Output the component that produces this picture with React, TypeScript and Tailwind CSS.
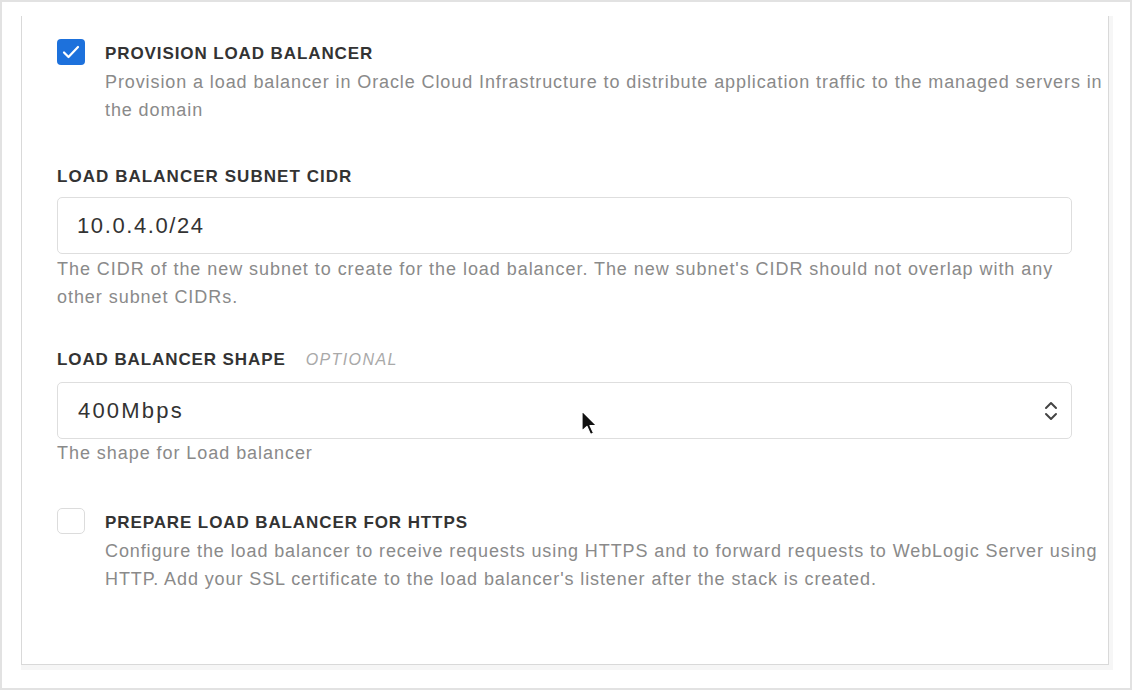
import React from "react";

const Check = () => (
  <svg width="18" height="14" viewBox="0 0 18 14" fill="none">
    <path d="M2 7.5 L6.5 12 L16 2" stroke="#fff" strokeWidth="2.2" strokeLinecap="round" strokeLinejoin="round" />
  </svg>
);

const CheckRow = ({ checked, title, desc }: { checked: boolean; title: string; desc: string }) => (
  <div className="flex items-start">
    {checked ? (
      <div className="w-[28px] h-[26px] shrink-0 rounded-[4px] bg-[#1d71dc] flex items-center justify-center">
        <Check />
      </div>
    ) : (
      <div className="w-[28px] h-[26px] shrink-0 rounded-[5px] border border-[#dcdcdc] bg-white" />
    )}
    <div className="ml-[20px] flex-1">
      <div className="text-[17px] font-bold text-[#333] leading-[30px] tracking-[0.9px]">{title}</div>
      <div className="-mt-[1px] text-[18px] text-[#8a8a8a] leading-[28px] tracking-[0.9px]">{desc}</div>
    </div>
  </div>
);

export default function App() {
  return (
    <div className="w-[1132px] h-[690px] bg-white border-2 border-[#e2e2e2] overflow-hidden" style={{ fontFamily: '"Liberation Sans", Arial, sans-serif' }}>
      <div className="ml-[19px] mr-[17px] mt-[14px] pr-[4px] pb-[5px] bg-[#f6f6f6]">
        <div className="relative h-[649px] bg-white border border-t-0 border-[#d9d9d9] pl-[35px] pt-[23px]">
          <CheckRow
            checked
            title="PROVISION LOAD BALANCER"
            desc="Provision a load balancer in Oracle Cloud Infrastructure to distribute application traffic to the managed servers in the domain"
          />

          <div className="mt-[43px] mr-[36px]">
            <div className="text-[17px] font-bold text-[#333] leading-[20px] tracking-[1.05px]">LOAD BALANCER SUBNET CIDR</div>
            <div className="mt-[10px] h-[57px] border border-[#dedede] rounded-[5px] flex items-center pl-[19px] text-[22px] text-[#333] tracking-[1.6px]">
              10.0.4.0/24
            </div>
            <div className="mt-[1px] text-[18px] text-[#8a8a8a] leading-[28px] tracking-[0.95px]">
              The CIDR of the new subnet to create for the load balancer. The new subnet's CIDR should not overlap with any other subnet CIDRs.
            </div>
          </div>

          <div className="mt-[39px] mr-[36px]">
            <div className="flex items-baseline leading-[20px]">
              <span className="text-[17px] font-bold text-[#333] tracking-[0.9px]">LOAD BALANCER SHAPE</span>
              <span className="ml-[20px] italic text-[#a9a9a9] text-[16px] tracking-[1.4px]">OPTIONAL</span>
            </div>
            <div className="mt-[12px] h-[57px] border border-[#dedede] rounded-[5px] flex items-center justify-between pl-[20px] pr-[13px] text-[22px] text-[#333] tracking-[2.2px]">
              <span>400Mbps</span>
              <svg width="14" height="24" viewBox="0 0 14 24" fill="none">
                <path d="M2 9 L7 4 L12 9" stroke="#444" strokeWidth="2" strokeLinecap="round" strokeLinejoin="round" />
                <path d="M2 15 L7 20 L12 15" stroke="#444" strokeWidth="2" strokeLinecap="round" strokeLinejoin="round" />
              </svg>
            </div>
            <div className="text-[18px] text-[#8a8a8a] leading-[28px] tracking-[0.95px]">The shape for Load balancer</div>
          </div>

          <div className="mt-[41px]">
            <CheckRow
              checked={false}
              title="PREPARE LOAD BALANCER FOR HTTPS"
              desc="Configure the load balancer to receive requests using HTTPS and to forward requests to WebLogic Server using HTTP. Add your SSL certificate to the load balancer's listener after the stack is created."
            />
          </div>

          <svg className="absolute left-[558px] top-[394px]" width="22" height="30" viewBox="0 0 22 30">
            <path d="M2 1 L2 21 L7 16.5 L10.5 24.5 L13.5 23 L10 15.5 L16.5 15.5 Z" fill="#111" stroke="#fff" strokeWidth="1.2" strokeLinejoin="round" />
          </svg>
        </div>
      </div>
    </div>
  );
}
